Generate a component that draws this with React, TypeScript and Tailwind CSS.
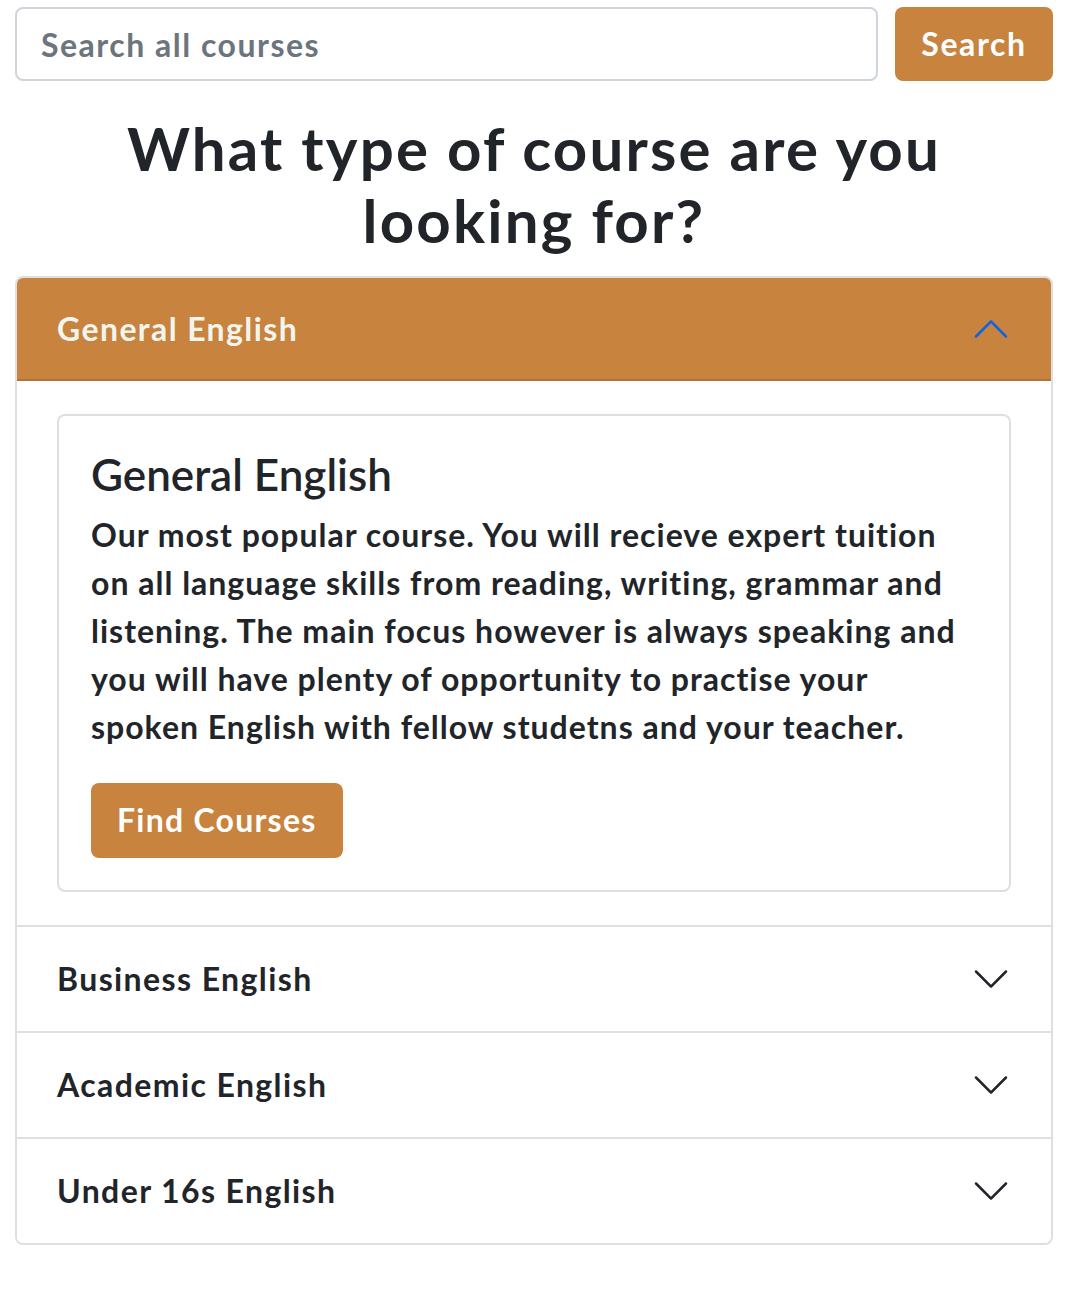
import { useState } from 'react';

const ORANGE = 'bg-[#c8833e]';

const courses = [
  {
    name: 'General English',
    lines: [
      'Our most popular course. You will recieve expert tuition',
      'on all language skills from reading, writing, grammar and',
      'listening. The main focus however is always speaking and',
      'you will have plenty of opportunity to practise your',
      'spoken English with fellow studetns and your teacher.',
    ],
  },
  { name: 'Business English', lines: [] },
  { name: 'Academic English', lines: [] },
  { name: 'Under 16s English', lines: [] },
];

function Chevron({ up }: { up?: boolean }) {
  return (
    <svg
      viewBox="0 0 16 16"
      className={up ? 'w-[40px] h-[40px] rotate-180 fill-[#0c63e4]' : 'w-[40px] h-[40px] fill-[#212529]'}
    >
      <path
        fillRule="evenodd"
        d="M1.646 4.646a.5.5 0 0 1 .708 0L8 10.293l5.646-5.647a.5.5 0 0 1 .708.708l-6 6a.5.5 0 0 1-.708 0l-6-6a.5.5 0 0 1 0-.708z"
      />
    </svg>
  );
}

export default function App() {
  const [open, setOpen] = useState(0);

  return (
    <div className="bg-white min-h-[1306px] pl-[15px] pr-[13px] pt-[7px] font-['Lato',sans-serif] text-[#212529]">
      {/* search bar */}
      <div className="flex gap-[17px]">
        <input
          placeholder="Search all courses"
          className="flex-1 h-[74px] border-2 border-[#ced4da] rounded-[8px] px-[24px] text-[32px] font-bold tracking-[1.5px] placeholder:text-[#6c757d] outline-none"
        />
        <button className={`w-[158px] h-[74px] ${ORANGE} rounded-[8px] text-white text-[32px] font-bold tracking-[1.6px]`}>
          Search
        </button>
      </div>

      <h1 className="mt-[31px] mb-[20px] text-center text-[60px] leading-[1.2] font-bold tracking-[2.2px]">
        What type of course are you
        <br />
        looking for?
      </h1>

      {/* accordion */}
      <div className="border-2 border-[#dfdfdf] rounded-[8px] overflow-hidden">
        {courses.map((c, i) => {
          const isOpen = open === i;
          return (
            <div key={c.name} className={i > 0 ? 'border-t-2 border-[#dfdfdf]' : ''}>
              <button
                onClick={() => setOpen(isOpen ? -1 : i)}
                className={
                  isOpen
                    ? `w-full h-[103px] ${ORANGE} border-b-2 border-[#b27336] pl-[40px] pr-[40px] flex items-center justify-between text-[32px] font-bold tracking-[1.4px] text-[#f1f5ef]`
                    : 'w-full h-[104px] bg-white pl-[40px] pr-[40px] flex items-center justify-between text-[32px] font-bold tracking-[1.4px] text-[#212529]'
                }
              >
                <span>{c.name}</span>
                <Chevron up={isOpen} />
              </button>
              {isOpen && (
                <div className="px-[40px] py-[33px]">
                  <div className="border-2 border-[#dfdfdf] rounded-[8px] p-[32px]">
                    <h4 className="text-[44px] leading-[1.2] font-semibold mb-[10px]">{c.name}</h4>
                    <p className="text-[32px] leading-[48px] font-bold tracking-[1px] mb-[32px]">
                      {c.lines.map((l, j) => (
                        <span key={j}>
                          {l}
                          {j < c.lines.length - 1 && <br />}
                        </span>
                      ))}
                    </p>
                    <button className={`h-[75px] px-[26px] ${ORANGE} rounded-[8px] text-white text-[32px] font-bold tracking-[1.25px]`}>
                      Find Courses
                    </button>
                  </div>
                </div>
              )}
            </div>
          );
        })}
      </div>
    </div>
  );
}
